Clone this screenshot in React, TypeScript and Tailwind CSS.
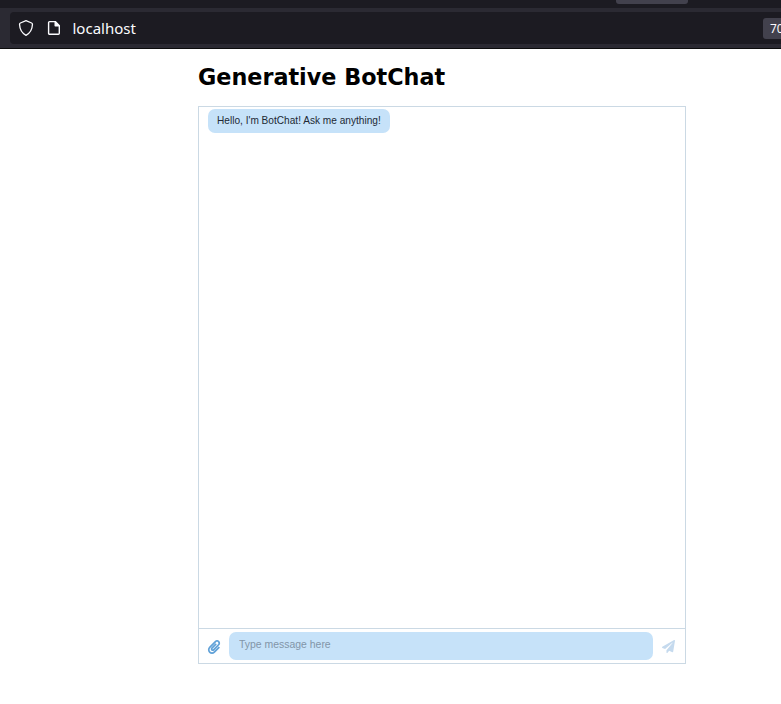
import React from "react";
import { FaPaperPlane, FaPaperclip } from "react-icons/fa";

function BrowserBar() {
  return (
    <header className="h-[49px] overflow-hidden border-b border-[#0c0c0d] bg-[#2b2a33]">
      <div className="flex h-2 items-start bg-[#1c1b22] pl-[616px]">
        <div className="h-1 w-[72px] rounded-b-[3px] bg-[#42414d]" />
      </div>
      <div className="mt-1 ml-2.5 flex h-8 items-center rounded-l bg-[#1c1b22] pl-2 text-[#fbfbfe]">
        <svg className="size-4 shrink-0" viewBox="0 0 16 16" fill="none" stroke="currentColor" strokeWidth="1.3" strokeLinejoin="round">
          <path d="M8 .7 L13.6 3 Q14.6 3.5 14.4 4.8 C14.2 9.6 12 13.2 8 15.3 C4 13.2 1.8 9.6 1.6 4.8 Q1.4 3.5 2.4 3 Z" />
        </svg>
        <svg className="ml-3 size-4 shrink-0" viewBox="0 0 16 16" fill="none" stroke="currentColor" strokeWidth="1.4" strokeLinejoin="round">
          <path d="M3.6 1.6h5.6l4.1 4.1v7.6a1 1 0 0 1-1 1H3.6a1 1 0 0 1-1-1V2.6a1 1 0 0 1 1-1z" />
          <path d="M9.2 1.8v3.9h3.9z" fill="currentColor" />
        </svg>
        <span className="ml-[10.5px] w-[690.5px] shrink-0 font-['Noto_Sans',sans-serif] text-[15px] leading-5">localhost</span>
        <span className="flex h-[21px] w-10 shrink-0 items-center rounded-[3px] bg-[#42414d] pt-px pl-[7px] font-['Noto_Sans',sans-serif] text-[12px]">70</span>
      </div>
    </header>
  );
}

export default function App() {
  return (
    <div className="h-[704px] w-[781px] overflow-hidden bg-white">
      <BrowserBar />
      <main className="ml-[198px] w-[488px] font-['Liberation_Sans',Arial,sans-serif]">
        <h1 className="flex h-[57px] items-center font-['DejaVu_Sans',sans-serif] text-[22.3px] font-bold whitespace-nowrap text-black">
          Generative BotChat
        </h1>
        <section className="flex h-[558px] flex-col border border-[#cbd9e4]">
          <div className="flex-1 pt-0.5 pl-[9px]">
            <div className="h-6 w-[182px] rounded-[7px] bg-[#c6e2f9] pt-1 pl-[9px] text-[10.12px] leading-4 whitespace-nowrap text-[#212934]">
              Hello, I'm BotChat! Ask me anything!
            </div>
          </div>
          <div className="flex h-[35px] border-t border-[#cbd9e4] pt-[3px]">
            <button className="flex h-7 w-[30px] items-center justify-center" aria-label="Attach">
              <FaPaperclip className="mt-px mr-px size-[14px] text-[#62a2d8]" />
            </button>
            <input
              className="h-7 w-[424px] rounded-[7px] bg-[#c6e2f9] px-2.5 pb-[3px] text-[10.45px] outline-none placeholder:text-[#8295a8]"
              placeholder="Type message here"
            />
            <button className="flex h-7 flex-1 items-center justify-center" aria-label="Send">
              <FaPaperPlane className="mt-px mr-px size-[13px] text-[#c5daee]" />
            </button>
          </div>
        </section>
      </main>
    </div>
  );
}
